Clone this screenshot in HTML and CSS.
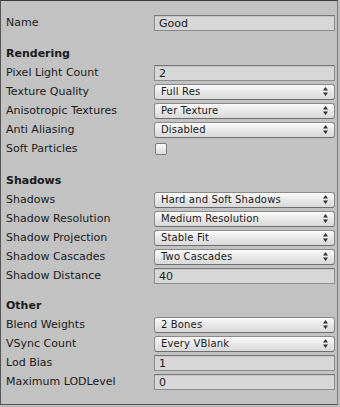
FILE: index.html
```html
<!DOCTYPE html>
<html>
<head>
<link rel="stylesheet" href="styles.css">
</head>
<body>

<div class="inspector">
    <div class="row">
        <span class="label">Name</span>
        <div class="field">Good</div>
    </div>

    <div class="section">
        <div class="header">Rendering</div>
        <div class="row">
            <span class="label">Pixel Light Count</span>
            <div class="field">2</div>
        </div>
        <div class="row">
            <span class="label">Texture Quality</span>
            <div class="popup">Full Res<svg class="arrows" viewBox="0 0 5 9"><path d="M2.5 0L5 3.5H0Z M2.5 9L0 5.5H5Z"/></svg></div>
        </div>
        <div class="row">
            <span class="label">Anisotropic Textures</span>
            <div class="popup">Per Texture<svg class="arrows" viewBox="0 0 5 9"><path d="M2.5 0L5 3.5H0Z M2.5 9L0 5.5H5Z"/></svg></div>
        </div>
        <div class="row">
            <span class="label">Anti Aliasing</span>
            <div class="popup">Disabled<svg class="arrows" viewBox="0 0 5 9"><path d="M2.5 0L5 3.5H0Z M2.5 9L0 5.5H5Z"/></svg></div>
        </div>
        <div class="row">
            <span class="label">Soft Particles</span>
            <div class="checkbox"></div>
        </div>
    </div>

    <div class="section">
        <div class="header">Shadows</div>
        <div class="row">
            <span class="label">Shadows</span>
            <div class="popup">Hard and Soft Shadows<svg class="arrows" viewBox="0 0 5 9"><path d="M2.5 0L5 3.5H0Z M2.5 9L0 5.5H5Z"/></svg></div>
        </div>
        <div class="row">
            <span class="label">Shadow Resolution</span>
            <div class="popup">Medium Resolution<svg class="arrows" viewBox="0 0 5 9"><path d="M2.5 0L5 3.5H0Z M2.5 9L0 5.5H5Z"/></svg></div>
        </div>
        <div class="row">
            <span class="label">Shadow Projection</span>
            <div class="popup">Stable Fit<svg class="arrows" viewBox="0 0 5 9"><path d="M2.5 0L5 3.5H0Z M2.5 9L0 5.5H5Z"/></svg></div>
        </div>
        <div class="row">
            <span class="label">Shadow Cascades</span>
            <div class="popup">Two Cascades<svg class="arrows" viewBox="0 0 5 9"><path d="M2.5 0L5 3.5H0Z M2.5 9L0 5.5H5Z"/></svg></div>
        </div>
        <div class="row">
            <span class="label">Shadow Distance</span>
            <div class="field">40</div>
        </div>
    </div>

    <div class="section">
        <div class="header">Other</div>
        <div class="row">
            <span class="label">Blend Weights</span>
            <div class="popup">2 Bones<svg class="arrows" viewBox="0 0 5 9"><path d="M2.5 0L5 3.5H0Z M2.5 9L0 5.5H5Z"/></svg></div>
        </div>
        <div class="row">
            <span class="label">VSync Count</span>
            <div class="popup">Every VBlank<svg class="arrows" viewBox="0 0 5 9"><path d="M2.5 0L5 3.5H0Z M2.5 9L0 5.5H5Z"/></svg></div>
        </div>
        <div class="row">
            <span class="label">Lod Bias</span>
            <div class="field">1</div>
        </div>
        <div class="row">
            <span class="label">Maximum LODLevel</span>
            <div class="field">0</div>
        </div>
    </div>
</div>

</body>
</html>
```

FILE: styles.css
```css
body {
    margin: 0;
    background: #bdbdbd;
    font-family: "DejaVu Sans", sans-serif;
    font-size: 11px;
    color: #1a1a1a;
}

.inspector {
    width: 331px;
    height: 391px;
    background: #c2c2c2;
    border-top: 1px solid #3a3a3a;
    border-left: 1px solid #555;
    border-right: 1px solid #7c7c7c;
    border-bottom: 1px solid #555;
    padding: 12px 0 0 5px;
}

.section {
    margin-top: 12px;
}

.section + .section {
    margin-top: 13px;
}

.section:last-child {
    margin-top: 11px;
}

.header {
    height: 19px;
    line-height: 19px;
    font-weight: bold;
}

.row {
    height: 19px;
    display: flex;
    align-items: center;
}

.label {
    width: 148px;
    flex: none;
}

.field {
    width: 181px;
    height: 16px;
    line-height: 15px;
    box-sizing: border-box;
    padding-left: 4px;
    background: #d7d7d7;
    border: 1px solid #8c8c8c;
    border-top-color: #777;
    box-shadow: inset 0 1px 0 #c4c4c4;
}

.popup {
    width: 181px;
    height: 16px;
    box-sizing: border-box;
    padding-left: 6px;
    display: flex;
    align-items: center;
    justify-content: space-between;
    background: linear-gradient(#fbfbfb, #e6e6e6 55%, #d9d9d9);
    border: 1px solid #8a8a8a;
    border-bottom-color: #6e6e6e;
    border-radius: 3px;
    font-size: 10px;
    letter-spacing: 0.15px;
}

.arrows {
    width: 5px;
    height: 9px;
    margin-right: 6px;
    fill: #333;
}

.checkbox {
    width: 12px;
    height: 12px;
    margin-left: 1px;
    box-sizing: border-box;
    background: linear-gradient(#fafafa, #dcdcdc);
    border: 1px solid #7a7a7a;
    border-radius: 2px;
}
```
